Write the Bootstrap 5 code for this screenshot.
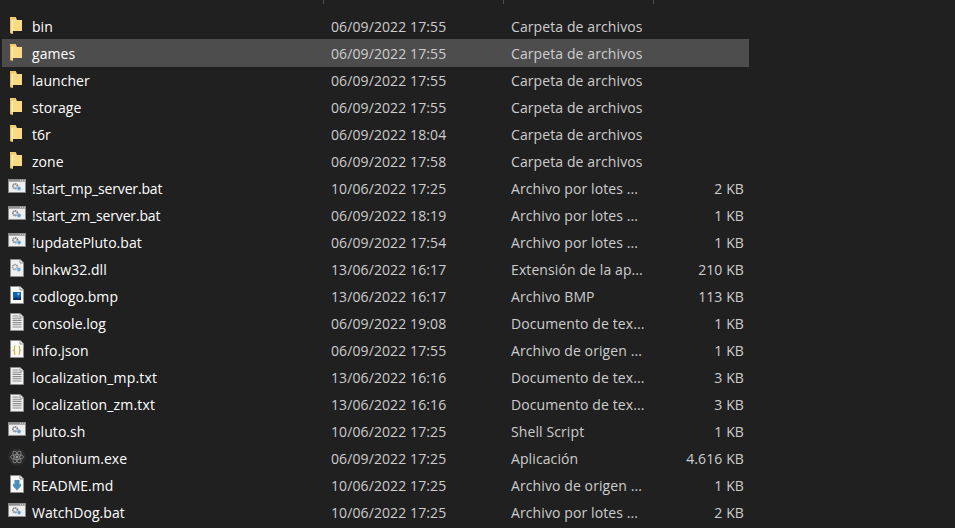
<!DOCTYPE html>
<html lang="es">
<head>
<meta charset="utf-8">
<title>Explorador de archivos</title>
<link href="https://cdn.jsdelivr.net/npm/bootstrap@5.3.0/dist/css/bootstrap.min.css" rel="stylesheet">
<style>
html,body{height:100%;overflow:hidden;background:#202020}
body{font-family:"Open Sans","Noto Sans","Liberation Sans",sans-serif;font-size:14px;color:#fff;width:955px}
.head-strip{height:4px;width:747px;margin-left:2px}
.head-cell{border-right:1px solid #505050}
.c-name{width:322px;flex:none}
.c-date{width:180px;flex:none}
.c-type{width:150px;flex:none}
.file-list{padding-top:9px;width:747px;margin-left:2px}
.file-row{height:27px;line-height:27px;white-space:nowrap}
.file-row.is-sel{background:#4d4d4d;box-shadow:0 -1px 0 #4d4d4d}
.ico{width:18px;height:18px;flex:none;margin:0 6px 3px 6px}
.f-name{display:flex;align-items:center;letter-spacing:.05px}
.f-name.nm-tight{letter-spacing:-.16px}
.f-name.nm-wide{letter-spacing:.16px}
.f-date,.f-type{color:#cdcdcd;letter-spacing:.1px}
.f-date{padding-left:7px}
.f-type{padding-left:7px;overflow:hidden}
.f-size{flex:1;text-align:right;padding-right:5px;color:#cdcdcd;letter-spacing:.1px}
</style>
</head>
<body>
<svg width="0" height="0" class="d-block">
<defs>
<symbol id="i-folder" viewBox="0 0 18 18">
<path d="M2 1h5.500l1.500 3H14v11H5v3l-3-1z" fill="#fcd983"/>
<path d="M2 1h1.500v16.500L2 17z" fill="#e9bd62"/>
<path d="M3.500 4H5v11H3.500z" fill="#fff0c4"/>
<path d="M2 1h5.500l1 2H2z" fill="#f2c86c"/>
</symbol>
<symbol id="i-gear-win" viewBox="0 0 18 18">
<rect x=".5" y="1.500" width="17" height="13" fill="#eeeeee" stroke="#8a8a8a"/>
<rect x="1" y="2" width="16" height="1.700" fill="#8f8f8f"/>
<path d="M12 2.400h1M14 2.400h1M16 2.400h.8" stroke="#e0e0e0" stroke-width=".8"/>
<circle cx="7.200" cy="8.200" r="2.300" fill="none" stroke="#858585" stroke-width="1.800" stroke-dasharray="1.400 .5"/>
<circle cx="11" cy="10.500" r="2" fill="#5a9bd6" stroke="#c2d8ec" stroke-width=".9"/>
</symbol>
<symbol id="i-gear-doc" viewBox="0 0 18 18">
<path d="M2.500 .5h9.500l3.500 3.500v13.500h-13z" fill="#efefef" stroke="#8f8f8f"/>
<path d="M12 .5v3.500h3.500" fill="#fff" stroke="#8f8f8f"/>
<circle cx="7" cy="8" r="2.400" fill="none" stroke="#999" stroke-width="1.700" stroke-dasharray="1.400 .5"/>
<circle cx="10.800" cy="10.500" r="2.100" fill="#6aa8de" stroke="#c3dbef" stroke-width=".9"/>
</symbol>
<symbol id="i-bmp" viewBox="0 0 18 18">
<path d="M2.500 .5h9.500l3.500 3.500v13.500h-13z" fill="#fbfbfb" stroke="#8f8f8f"/>
<path d="M12 .5v3.500h3.500" fill="#fff" stroke="#8f8f8f"/>
<rect x="5" y="6" width="8" height="8" fill="#1560b0"/>
<path d="M5 14l3-3.500 2 2 3-2v3.500z" fill="#0b2f6e"/>
<circle cx="10.500" cy="8" r="1.200" fill="#8cc4f2"/>
</symbol>
<symbol id="i-txt" viewBox="0 0 18 18">
<path d="M2.500 .5h9.500l3.500 3.500v13.500h-13z" fill="#f2f2f2" stroke="#8f8f8f"/>
<path d="M12 .5v3.500h3.500" fill="#fff" stroke="#8f8f8f"/>
<path d="M4.500 3h6M4.500 5.200h9M4.500 7.400h9M4.500 9.600h9M4.500 11.800h9M4.500 14h9" stroke="#8a8a8a" stroke-width="1.100"/>
</symbol>
<symbol id="i-json" viewBox="0 0 18 18">
<path d="M2.500 .5h9.500l3.500 3.500v13.500h-13z" fill="#fbfbfb" stroke="#8f8f8f"/>
<path d="M12 .5v3.500h3.500" fill="#fff" stroke="#8f8f8f"/>
<path d="M7.500 6c-1.500 0-1 .8-1 2.500S6 10 5.500 10.300c.5.300 1 0 1 1.700s-.5 2.400 1 2.400M10.500 6c1.500 0 1 .8 1 2.500s.5 1.500 1 1.800c-.5.300-1 0-1 1.700s.5 2.400-1 2.400" fill="none" stroke="#cdb83a" stroke-width="1.200"/>
</symbol>
<symbol id="i-md" viewBox="0 0 18 18">
<path d="M2.500 .5h9.500l3.500 3.500v13.500h-13z" fill="#f7f7f7" stroke="#8f8f8f"/>
<path d="M12 .5v3.500h3.500" fill="#fff" stroke="#8f8f8f"/>
<path d="M6.500 5h5v4.500l1.500-1v2.500L9 15.500 5 11V8.500l1.500 1z" fill="#4a8fb8"/>
</symbol>
<symbol id="i-atom" viewBox="0 0 18 18">
<circle cx="9" cy="9" r="9" fill="#2a2a2a"/>
<g fill="none" stroke="#808080" stroke-width="1">
<ellipse cx="9" cy="9" rx="6.500" ry="2.500"/>
<ellipse cx="9" cy="9" rx="6.500" ry="2.500" transform="rotate(60 9 9)"/>
<ellipse cx="9" cy="9" rx="6.500" ry="2.500" transform="rotate(120 9 9)"/>
</g>
<circle cx="9" cy="9" r="1.500" fill="#999"/>
</symbol>
</defs>
</svg>

<div class="head-strip d-flex">
<div class="head-cell c-name"></div>
<div class="head-cell c-date"></div>
<div class="head-cell c-type"></div>
</div>

<div class="file-list">
<div class="file-row d-flex"><div class="f-name c-name"><svg class="ico"><use href="#i-folder"/></svg>bin</div><div class="f-date c-date">06/09/2022 17:55</div><div class="f-type c-type">Carpeta de archivos</div><div class="f-size"></div></div>
<div class="file-row is-sel d-flex"><div class="f-name c-name"><svg class="ico"><use href="#i-folder"/></svg>games</div><div class="f-date c-date">06/09/2022 17:55</div><div class="f-type c-type">Carpeta de archivos</div><div class="f-size"></div></div>
<div class="file-row d-flex"><div class="f-name c-name"><svg class="ico"><use href="#i-folder"/></svg>launcher</div><div class="f-date c-date">06/09/2022 17:55</div><div class="f-type c-type">Carpeta de archivos</div><div class="f-size"></div></div>
<div class="file-row d-flex"><div class="f-name c-name"><svg class="ico"><use href="#i-folder"/></svg>storage</div><div class="f-date c-date">06/09/2022 17:55</div><div class="f-type c-type">Carpeta de archivos</div><div class="f-size"></div></div>
<div class="file-row d-flex"><div class="f-name c-name"><svg class="ico"><use href="#i-folder"/></svg>t6r</div><div class="f-date c-date">06/09/2022 18:04</div><div class="f-type c-type">Carpeta de archivos</div><div class="f-size"></div></div>
<div class="file-row d-flex"><div class="f-name c-name"><svg class="ico"><use href="#i-folder"/></svg>zone</div><div class="f-date c-date">06/09/2022 17:58</div><div class="f-type c-type">Carpeta de archivos</div><div class="f-size"></div></div>
<div class="file-row d-flex"><div class="f-name nm-tight c-name"><svg class="ico"><use href="#i-gear-win"/></svg>!start_mp_server.bat</div><div class="f-date c-date">10/06/2022 17:25</div><div class="f-type c-type">Archivo por lotes ...</div><div class="f-size">2 KB</div></div>
<div class="file-row d-flex"><div class="f-name nm-tight c-name"><svg class="ico"><use href="#i-gear-win"/></svg>!start_zm_server.bat</div><div class="f-date c-date">06/09/2022 18:19</div><div class="f-type c-type">Archivo por lotes ...</div><div class="f-size">1 KB</div></div>
<div class="file-row d-flex"><div class="f-name c-name"><svg class="ico"><use href="#i-gear-win"/></svg>!updatePluto.bat</div><div class="f-date c-date">06/09/2022 17:54</div><div class="f-type c-type">Archivo por lotes ...</div><div class="f-size">1 KB</div></div>
<div class="file-row d-flex"><div class="f-name c-name"><svg class="ico"><use href="#i-gear-doc"/></svg>binkw32.dll</div><div class="f-date c-date">13/06/2022 16:17</div><div class="f-type c-type">Extensión de la ap...</div><div class="f-size">210 KB</div></div>
<div class="file-row d-flex"><div class="f-name c-name"><svg class="ico"><use href="#i-bmp"/></svg>codlogo.bmp</div><div class="f-date c-date">13/06/2022 16:17</div><div class="f-type c-type">Archivo BMP</div><div class="f-size">113 KB</div></div>
<div class="file-row d-flex"><div class="f-name c-name"><svg class="ico"><use href="#i-txt"/></svg>console.log</div><div class="f-date c-date">06/09/2022 19:08</div><div class="f-type c-type">Documento de tex...</div><div class="f-size">1 KB</div></div>
<div class="file-row d-flex"><div class="f-name c-name"><svg class="ico"><use href="#i-json"/></svg>info.json</div><div class="f-date c-date">06/09/2022 17:55</div><div class="f-type c-type">Archivo de origen ...</div><div class="f-size">1 KB</div></div>
<div class="file-row d-flex"><div class="f-name nm-wide c-name"><svg class="ico"><use href="#i-txt"/></svg>localization_mp.txt</div><div class="f-date c-date">13/06/2022 16:16</div><div class="f-type c-type">Documento de tex...</div><div class="f-size">3 KB</div></div>
<div class="file-row d-flex"><div class="f-name nm-wide c-name"><svg class="ico"><use href="#i-txt"/></svg>localization_zm.txt</div><div class="f-date c-date">13/06/2022 16:16</div><div class="f-type c-type">Documento de tex...</div><div class="f-size">3 KB</div></div>
<div class="file-row d-flex"><div class="f-name c-name"><svg class="ico"><use href="#i-gear-win"/></svg>pluto.sh</div><div class="f-date c-date">10/06/2022 17:25</div><div class="f-type c-type">Shell Script</div><div class="f-size">1 KB</div></div>
<div class="file-row d-flex"><div class="f-name c-name"><svg class="ico"><use href="#i-atom"/></svg>plutonium.exe</div><div class="f-date c-date">06/09/2022 17:25</div><div class="f-type c-type">Aplicación</div><div class="f-size">4.616 KB</div></div>
<div class="file-row d-flex"><div class="f-name c-name"><svg class="ico"><use href="#i-md"/></svg>README.md</div><div class="f-date c-date">10/06/2022 17:25</div><div class="f-type c-type">Archivo de origen ...</div><div class="f-size">1 KB</div></div>
<div class="file-row d-flex"><div class="f-name c-name"><svg class="ico"><use href="#i-gear-win"/></svg>WatchDog.bat</div><div class="f-date c-date">10/06/2022 17:25</div><div class="f-type c-type">Archivo por lotes ...</div><div class="f-size">2 KB</div></div>
</div>
<script src="https://cdn.jsdelivr.net/npm/bootstrap@5.3.0/dist/js/bootstrap.bundle.min.js"></script>
</body>
</html>
